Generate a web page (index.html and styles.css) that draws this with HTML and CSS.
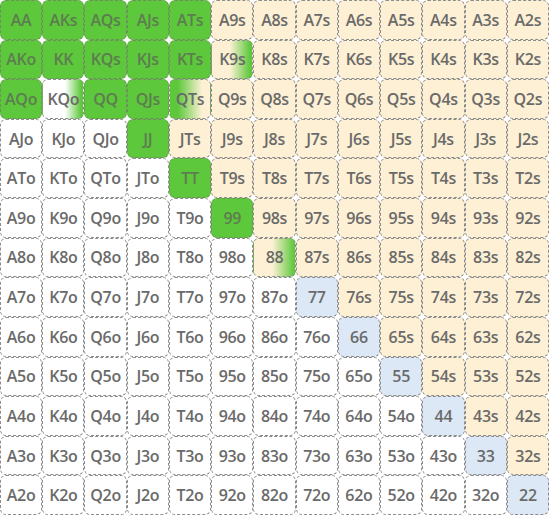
FILE: index.html
```html
<!DOCTYPE html>
<html>
<head>
<meta charset="utf-8">
<link rel="stylesheet" href="styles.css">
</head>
<body>
<div class="grid" id="grid"></div>
<script src="script.js"></script>
</body>
</html>
```

FILE: styles.css
```css
html, body {
  margin: 0;
  padding: 0;
  background: #ffffff;
}
.grid {
  width: 549px;
  height: 515px;
  display: grid;
  grid-template-columns: repeat(13, 1fr);
  grid-template-rows: repeat(13, 1fr);
  font-family: "Open Sans", "Liberation Sans", sans-serif;
}
.cell {
  border: 1px dashed #8c8c8c;
  border-radius: 6px;
  display: flex;
  align-items: center;
  justify-content: center;
  font-size: 16px;
  font-weight: 600;
  color: #6a6a6a;
  background: #ffffff;
  letter-spacing: -0.3px;
}
.suited { background: #fdf0d4; }
.pair { background: #dce8f5; }
.green { background: #5ec83c; color: #5d7d50; border-color: #6d8f5d; }
.mix-kqo { background: linear-gradient(to right, #ffffff 55%, #5ec83c 95%); }
.mix-k9s { background: linear-gradient(to right, #fdf0d4 45%, #5ec83c 95%); }
.mix-qts { background: linear-gradient(to right, #5ec83c 20%, #fdf0d4 80%); }
.mix-88 { background: linear-gradient(to right, #fdf0d4 45%, #5ec83c 98%); }
```

FILE: script.js
```js
var ranks = ["A","K","Q","J","T","9","8","7","6","5","4","3","2"];
var green = ["AA","AKs","AQs","AJs","ATs","AKo","KK","KQs","KJs","KTs","AQo","QQ","QJs","JJ","TT","99"];
var mixes = {"KQo":"mix-kqo","K9s":"mix-k9s","QTs":"mix-qts","88":"mix-88"};
var grid = document.getElementById("grid");
for (var i = 0; i < 13; i++) {
  for (var j = 0; j < 13; j++) {
    var name, cls = "cell";
    if (i === j) { name = ranks[i] + ranks[j]; cls += " pair"; }
    else if (j > i) { name = ranks[i] + ranks[j] + "s"; cls += " suited"; }
    else { name = ranks[j] + ranks[i] + "o"; }
    if (green.indexOf(name) >= 0) cls += " green";
    if (mixes[name]) cls += " " + mixes[name];
    var d = document.createElement("div");
    d.className = cls;
    d.textContent = name;
    grid.appendChild(d);
  }
}
```
